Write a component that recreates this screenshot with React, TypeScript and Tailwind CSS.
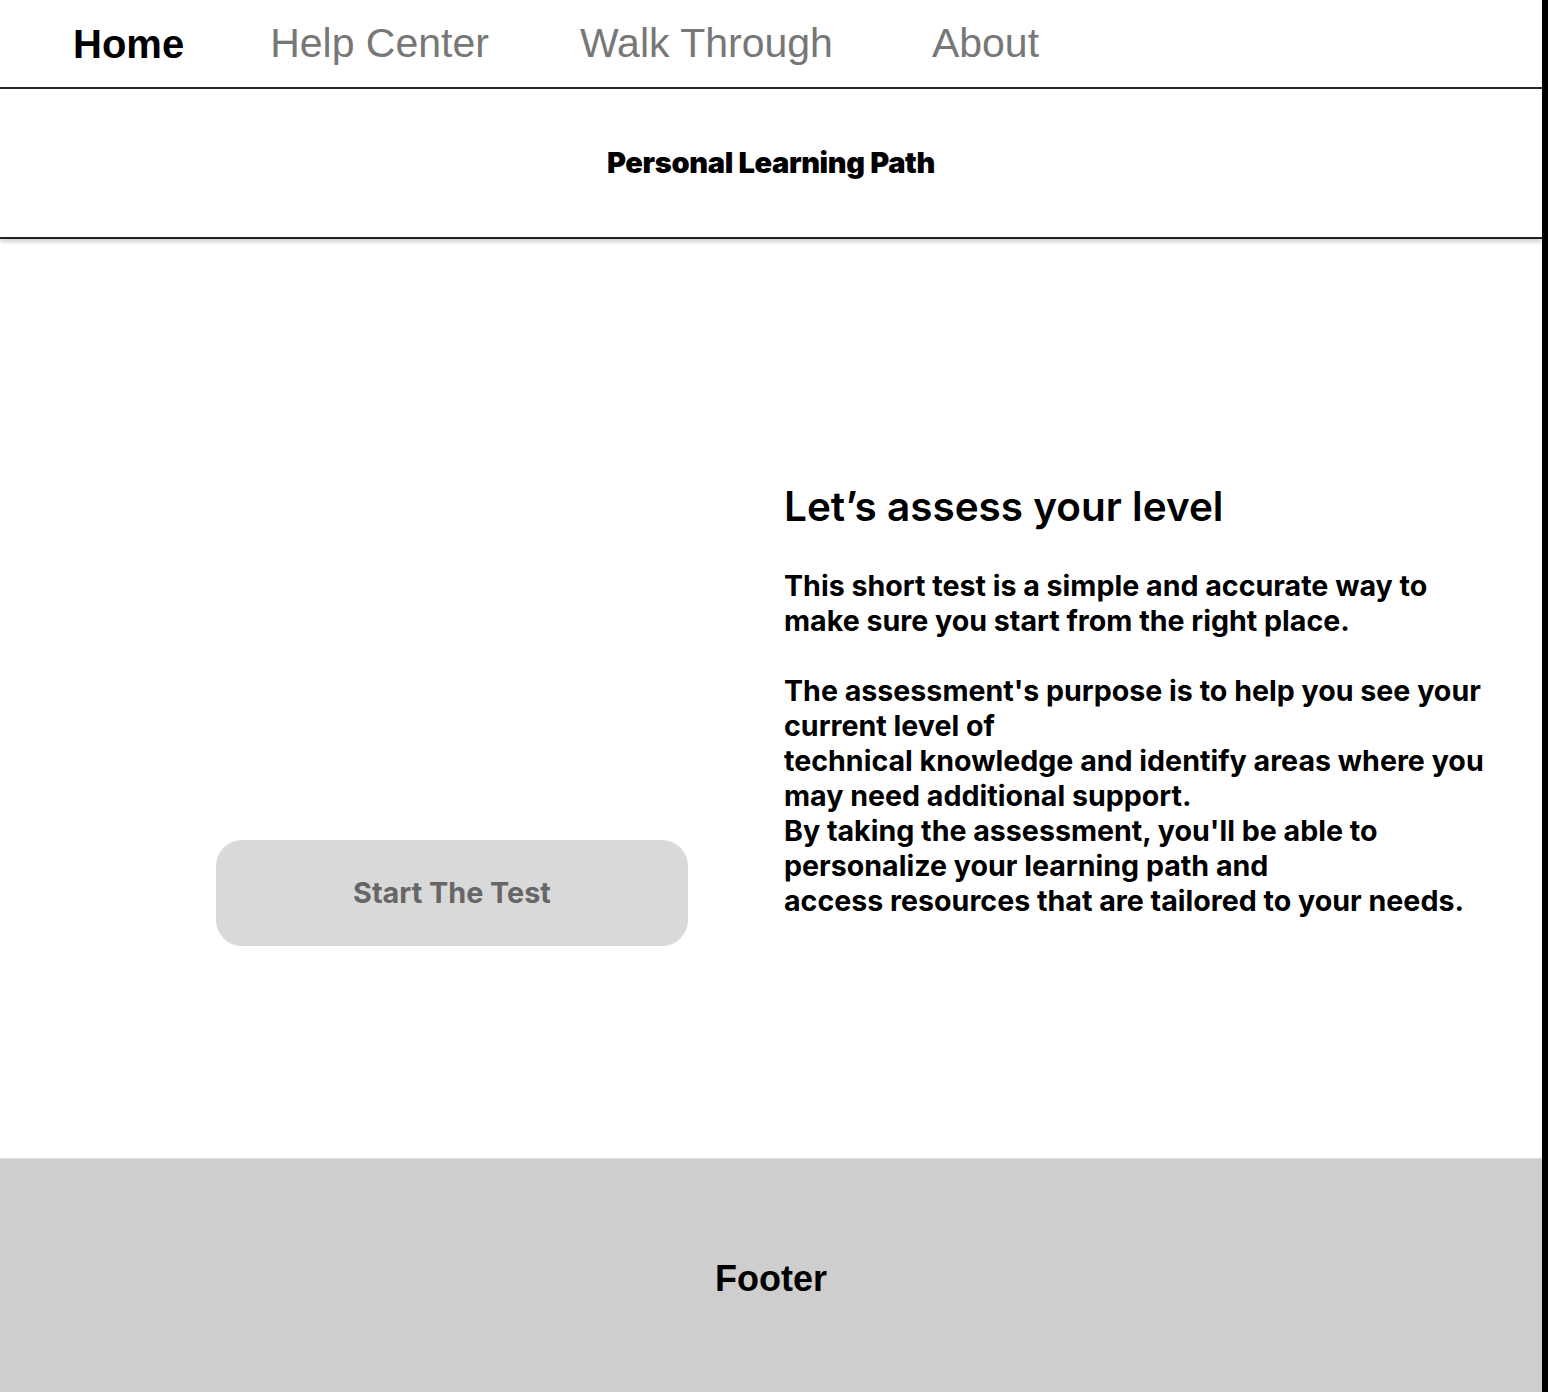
import React from "react";

export default function App() {
  const inter = { fontFamily: "Inter, 'Noto Sans', sans-serif" };
  return (
    <div className="w-[1548px] min-h-[1392px] flex flex-col bg-white border-r-[6px] border-black">
      <nav
        className="h-[89px] flex items-center border-b-2 border-[#2a2a2a] text-[41px] text-[#777777]"
        style={{ fontFamily: "'Liberation Sans', Arial, sans-serif" }}
      >
        <a className="ml-[73px] font-bold text-black text-[40px]">Home</a>
        <a className="ml-[86px]">Help Center</a>
        <a className="ml-[91px]">Walk Through</a>
        <a className="ml-[99px]">About</a>
      </nav>

      <header className="h-[150px] flex items-center justify-center border-b-2 border-[#222] shadow-[0_3px_4px_rgba(0,0,0,0.18)]">
        <h1 className="text-[29px] font-black text-black tracking-[-0.35px]" style={inter}>
          Personal Learning Path
        </h1>
      </header>

      <main className="flex-1 flex flex-row" style={inter}>
        <div className="w-[784px] pl-[216px] pt-[601px]">
          <button className="w-[472px] h-[106px] rounded-[26px] bg-[#d9d9d9] text-[#666666] text-[28.8px] font-bold">
            Start The Test
          </button>
        </div>
        <div className="flex-1 pt-[244px] text-black">
          <h2 className="text-[40.5px] leading-[48px] font-semibold">Let’s assess your level</h2>
          <p className="mt-[37px] text-[28.6px] leading-[35px] font-bold">
            This short test is a simple and accurate way to
            <br />
            make sure you start from the right place.
            <br />
            <br />
            The assessment's purpose is to help you see your
            <br />
            current level of
            <br />
            technical knowledge and identify areas where you
            <br />
            may need additional support.
            <br />
            By taking the assessment, you'll be able to
            <br />
            personalize your learning path and
            <br />
            access resources that are tailored to your needs.
          </p>
        </div>
      </main>

      <footer className="h-[234px] bg-[#cecece] border-t border-[#dddddd] flex justify-center pt-[93px]">
        <span
          className="text-[36px] font-bold text-black"
          style={{ fontFamily: "'Liberation Sans', Arial, sans-serif" }}
        >
          Footer
        </span>
      </footer>
    </div>
  );
}
